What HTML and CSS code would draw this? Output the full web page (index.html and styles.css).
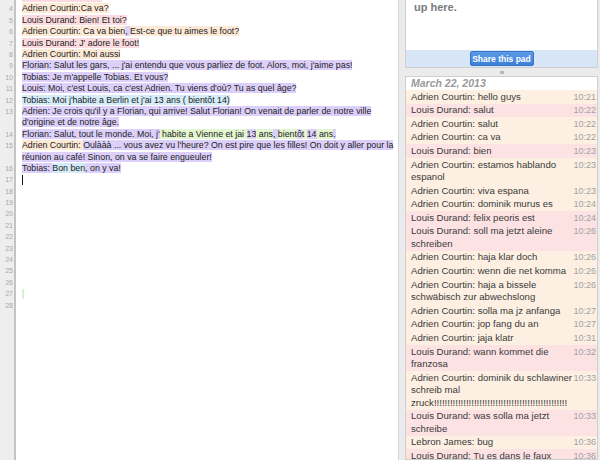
FILE: index.html
```html
<!DOCTYPE html>
<html lang="fr">
<head>
  <meta charset="UTF-8" />
  <meta name="viewport" content="width=device-width, initial-scale=1.0"/>
  <title>Etherpad</title>
  <link rel="stylesheet" href="styles.css">
</head>
<body>
  <div class="pad">
    <div class="editor">
      <div class="gutter">
        <div class="nums">
          <div>3</div><div>4</div><div>5</div><div>6</div><div>7</div><div>8</div>
          <div>9</div><div>10</div><div>11</div><div>12</div><div class="tall">13</div>
          <div>14</div><div class="tall">15</div><div>16</div><div>17</div><div>18</div>
          <div>19</div><div>20</div><div>21</div><div>22</div><div>23</div><div>24</div>
          <div>25</div><div>26</div><div>27</div><div>28</div>
        </div>
      </div>
      <div class="lines">
        <div class="line"><span class="au-louis">Louis Durand: Salut!</span></div>
        <div class="line"><span class="au-adrien">Adrien Courtin:Ca va?</span></div>
        <div class="line"><span class="au-louis">Louis Durand: Bien! Et toi?</span></div>
        <div class="line"><span class="au-adrien">Adrien Courtin: Ca va bien</span><span class="au-purple">, </span><span class="au-adrien">Est-ce que tu aimes le foot?</span></div>
        <div class="line"><span class="au-louis">Louis Durand: J' adore le foot!</span></div>
        <div class="line"><span class="au-adrien">Adrien Courtin: Moi aussi</span></div>
        <div class="line"><span class="au-purple">Florian: Salut les gars, ... j'ai entendu que vous parliez de foot. Alors, moi, j'aime pas!</span></div>
        <div class="line"><span class="au-purple">Tobias: Je m'appelle Tobias. Et vous?</span></div>
        <div class="line"><span class="au-purple">Louis: Moi, c'est Louis, ca c'est Adrien. Tu viens d'où? Tu as quel âge?</span></div>
        <div class="line"><span class="au-blue">Tobias: Moi j'habite a Berlin et j'ai 13 ans ( bientôt 14)</span></div>
        <div class="line"><span class="au-purple">Adrien: Je crois qu'il y a Florian, qui arrive! Salut Florian! On venait de parler de notre ville d'origine et de notre âge.</span></div>
        <div class="line"><span class="au-purple">Florian: Salut, tout le monde. Moi, j'</span><span class="au-green"> habite a Vienne et jai </span><span class="au-purple">13</span><span class="au-green"> ans</span><span class="au-purple">, </span><span class="au-green">bient</span><span class="au-purple">ô</span><span class="au-green">t </span><span class="au-purple">14</span><span class="au-green"> ans</span><span class="au-purple">.</span></div>
        <div class="line"><span class="au-adrien">Adrien Courtin: </span><span class="au-purple">Oulààà ... vous avez vu l'heure? On est pire que les filles! On doit y aller pour la réunion au café! Sinon, on va se faire engueuler!</span></div>
        <div class="line"><span class="au-purple">Tobias: </span><span class="au-blue">Bon ben</span><span class="au-purple">, on y va!</span></div>
        <div class="line"><span class="caret"></span></div>
        <div class="line"></div>
        <div class="line"></div>
        <div class="line"></div>
        <div class="line"></div>
        <div class="line"></div>
        <div class="line"></div>
        <div class="line"></div>
        <div class="line"></div>
        <div class="line"></div>
        <div class="line"><span class="mark"></span></div>
        <div class="line"></div>
      </div>
    </div>

    <div class="side">
      <div class="share-box">
        <div class="share-text">Send this link to invite anybody<br>up here.</div>
        <div class="share-bar">
          <button class="share-btn">Share this pad</button>
        </div>
      </div>
      <div class="handle"><span></span></div>
      <div class="chat">
        <div class="chat-date">March 22, 2013</div>
        <p class="msg adrien"><span class="time">10:21</span>Adrien Courtin: hello guys</p>
        <p class="msg louis"><span class="time">10:22</span>Louis Durand: salut</p>
        <p class="msg adrien"><span class="time">10:22</span>Adrien Courtin: salut</p>
        <p class="msg adrien"><span class="time">10:22</span>Adrien Courtin: ca va</p>
        <p class="msg louis"><span class="time">10:23</span>Louis Durand: bien</p>
        <p class="msg adrien"><span class="time">10:23</span>Adrien Courtin: estamos hablando espanol</p>
        <p class="msg adrien"><span class="time">10:23</span>Adrien Courtin: viva espana</p>
        <p class="msg adrien"><span class="time">10:24</span>Adrien Courtin: dominik murus es</p>
        <p class="msg louis"><span class="time">10:24</span>Louis Durand: felix peoris est</p>
        <p class="msg louis"><span class="time">10:26</span>Louis Durand: soll ma jetzt aleine schreiben</p>
        <p class="msg adrien"><span class="time">10:26</span>Adrien Courtin: haja klar doch</p>
        <p class="msg adrien"><span class="time">10:26</span>Adrien Courtin: wenn die net komma</p>
        <p class="msg adrien"><span class="time">10:26</span>Adrien Courtin: haja a bissele schwäbisch zur abwechslong</p>
        <p class="msg adrien"><span class="time">10:27</span>Adrien Courtin: solla ma jz anfanga</p>
        <p class="msg adrien"><span class="time">10:27</span>Adrien Courtin: jop fang du an</p>
        <p class="msg adrien"><span class="time">10:31</span>Adrien Courtin: jaja klatr</p>
        <p class="msg louis"><span class="time">10:32</span>Louis Durand: wann kommet die franzosa</p>
        <p class="msg adrien"><span class="time">10:33</span>Adrien Courtin: dominik du schlawiner schreib mal zruck!!!!!!!!!!!!!!!!!!!!!!!!!!!!!!!!!!!!!!!!!!!!!!!!!!</p>
        <p class="msg louis"><span class="time">10:33</span>Louis Durand: was solla ma jetzt schreibe</p>
        <p class="msg lebron"><span class="time">10:36</span>Lebron James: bug</p>
        <p class="msg louis"><span class="time">10:36</span>Louis Durand: Tu es dans le faux</p>
      </div>
    </div>
  </div>
</body>
</html>
```

FILE: styles.css
```css
body {
  margin: 0;
  font-family: "Liberation Sans", Arial, sans-serif;
  background: #fff;
  overflow: hidden;
}
.pad {
  display: flex;
  height: 460px;
  overflow: hidden;
}
.editor {
  flex: 0 0 398px;
  display: flex;
  background: #fff;
  border-right: 1px solid #d6d6d6;
  overflow: hidden;
}
.gutter {
  flex: 0 0 14px;
  background: #eeeeee;
  border-right: 2px solid #c4c4c4;
}
.nums {
  margin-top: -8px;
}
.nums div {
  height: 11.4px;
  line-height: 11.4px;
  font-size: 7px;
  color: #a8a8a8;
  text-align: right;
  padding-right: 1px;
}
.nums div.tall {
  height: 22.8px;
}
.lines {
  margin-top: -8px;
  padding-left: 6px;
  width: 376px;
  font-size: 8.8px;
  line-height: 11.4px;
  color: #222;
}
.line {
  min-height: 11.4px;
}
.au-adrien { background: #fce9d6; }
.au-louis { background: #fbdbe0; }
.au-purple { background: #dcd0fa; }
.au-blue { background: #d3ecf8; }
.au-green { background: #e2f7cf; }
.caret {
  display: inline-block;
  width: 1px;
  height: 10px;
  background: #111;
  vertical-align: middle;
}
.mark {
  display: inline-block;
  width: 2px;
  height: 10px;
  background: #d9f3cf;
  vertical-align: middle;
}

.side {
  flex: 1;
  background: #ebebeb;
  padding: 0 2px 0 6px;
  display: flex;
  flex-direction: column;
  min-width: 0;
}
.share-box {
  background: #fff;
  border: 1px solid #cfcfcf;
  border-top: none;
}
.share-text {
  margin-top: -14px;
  padding: 0 8px;
  height: 64px;
  font-size: 11px;
  line-height: 14px;
  font-weight: bold;
  color: #7b7b7b;
}
.share-bar {
  background: #d8e5f7;
  height: 17px;
  display: flex;
  justify-content: center;
  align-items: center;
}
.share-btn {
  font-family: "Liberation Sans", Arial, sans-serif;
  font-size: 8.5px;
  font-weight: bold;
  color: #fff;
  background: linear-gradient(#5a9ae8, #3d7fd8);
  border: 1px solid #3a76c8;
  border-radius: 2px;
  width: 64px;
  height: 15px;
  padding: 0;
}
.handle {
  height: 8px;
  display: flex;
  justify-content: center;
  align-items: center;
}
.handle span {
  width: 4px;
  height: 3px;
  background: #b8b8b8;
}
.chat {
  flex: 1;
  background: #fff;
  border: 1px solid #cfcfcf;
  overflow: hidden;
}
.chat-date {
  height: 13px;
  padding: 0 5px;
  font-size: 10.5px;
  line-height: 13px;
  font-weight: bold;
  font-style: italic;
  color: #9a9a9a;
}
.msg {
  margin: 0;
  padding: 0.55px 1px 0.55px 5px;
  font-size: 9.6px;
  line-height: 12.5px;
  color: #3a3a3a;
}
.msg.adrien { background: #fdf0e2; }
.msg.louis { background: #fde2e4; }
.msg.lebron { background: #fdf0e2; }
.msg .time {
  float: right;
  font-size: 9px;
  color: #a0a0a0;
}
```
